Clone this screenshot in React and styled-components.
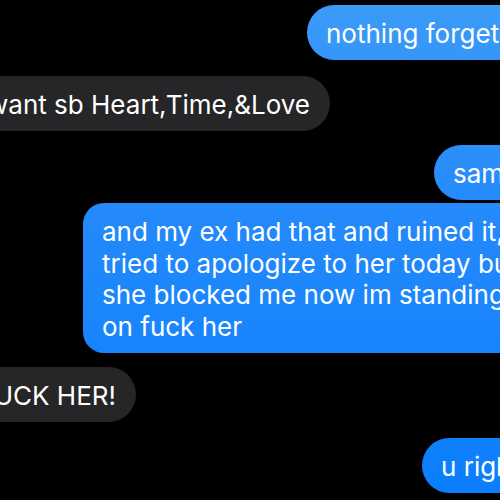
import styled, { createGlobalStyle } from 'styled-components'

const GlobalStyle = createGlobalStyle`
    html, body {
        margin: 0;
        padding: 0;
        background: #000;
        overflow: hidden;
    }
`

const messages = [
    { id: 1, sent: true, inset: 307, gap: 5, text: 'nothing forget you' },
    { id: 2, sent: false, inset: 330, gap: 16, text: 'want sb Heart,Time,&Love' },
    { id: 3, sent: true, inset: 434, gap: 14, text: 'same' },
    {
        id: 4,
        sent: true,
        inset: 83,
        gap: 3,
        block: true,
        lines: [
            'and my ex had that and ruined it, i',
            'tried to apologize to her today but',
            'she blocked me now im standing',
            'on fuck her',
        ],
    },
    { id: 5, sent: false, inset: 136, gap: 14, text: 'UCK HER!' },
    { id: 6, sent: true, inset: 422, gap: 16, text: 'u right' },
]

function App() {
    return (
        <>
            <GlobalStyle />
            <Thread>
                {messages.map(msg => (
                    <Row key={msg.id} $gap={msg.gap}>
                        {msg.sent ? (
                            <SentBubble $inset={msg.inset} $block={msg.block}>
                                {msg.lines
                                    ? msg.lines.map(line => <Line key={line}>{line}</Line>)
                                    : msg.text}
                            </SentBubble>
                        ) : (
                            <ReceivedBubble $inset={msg.inset}>{msg.text}</ReceivedBubble>
                        )}
                    </Row>
                ))}
            </Thread>
        </>
    )
}

export default App

const Thread = styled.main`
    width: 500px;
    height: 500px;
    overflow: hidden;
    display: flex;
    flex-direction: column;
    background: #000;
    font-family: Inter, "Liberation Sans", Arial, sans-serif;
    font-size: 26px;
    line-height: 31px;
    color: #fff;
`

const Row = styled.div`
    display: flex;
    margin-top: ${props => props.$gap}px;
    flex-shrink: 0;
`

const SentBubble = styled.div`
    margin-left: ${props => props.$inset}px;
    padding: ${props => (props.$block ? '13px 40px 11px 19px' : '13px 40px 11px 19px')};
    line-height: ${props => (props.$block ? '31.5px' : '31px')};
    border-radius: ${props => (props.$block ? '21px' : '28px')};
    white-space: nowrap;
    flex-shrink: 0;
    background: linear-gradient(180deg, #3b9bf8 0%, #2389fb 45%, #0a7efe 100%);
    background-attachment: fixed;
`

const Line = styled.div``

const ReceivedBubble = styled.div`
    width: ${props => props.$inset}px;
    box-sizing: border-box;
    padding: 13px 20px 11px 0;
    border-radius: 0 28px 28px 0;
    white-space: nowrap;
    flex-shrink: 0;
    display: flex;
    justify-content: flex-end;
    background: #262628;
`
